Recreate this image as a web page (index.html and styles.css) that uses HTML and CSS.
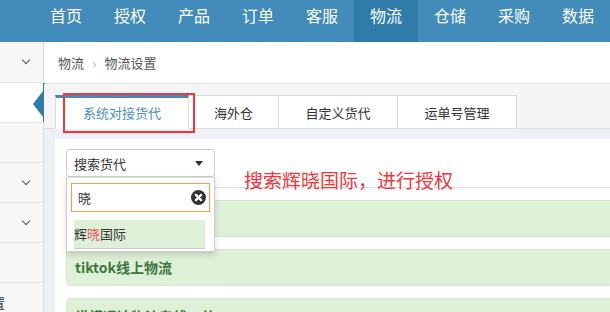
FILE: index.html
```html
<!DOCTYPE html>
<html lang="zh-CN">
<head>
    <meta charset="UTF-8">
    <meta name="viewport" content="width=device-width, initial-scale=1.0">
    <title>物流设置</title>
    <link rel="stylesheet" href="styles.css">
</head>
<body>
    <div class="topnav">
        <a class="nav-item">首页</a>
        <a class="nav-item">授权</a>
        <a class="nav-item">产品</a>
        <a class="nav-item">订单</a>
        <a class="nav-item">客服</a>
        <a class="nav-item active">物流</a>
        <a class="nav-item">仓储</a>
        <a class="nav-item">采购</a>
        <a class="nav-item">数据</a>
    </div>

    <div class="layout">
        <div class="sidebar">
            <div class="side-row"><span class="chevron"></span></div>
            <div class="side-row current"><span class="pointer"></span></div>
            <div class="side-row"></div>
            <div class="side-row"><span class="chevron"></span></div>
            <div class="side-row"><span class="chevron"></span></div>
            <div class="side-row"></div>
            <div class="side-row"><span class="cut-label">设置</span></div>
        </div>

        <div class="main">
            <div class="breadcrumb">
                <span>物流</span>
                <span class="crumb-sep">›</span>
                <span>物流设置</span>
            </div>

            <div class="tab-strip">
                <div class="tab active">系统对接货代</div>
                <div class="tab">海外仓</div>
                <div class="tab">自定义货代</div>
                <div class="tab">运单号管理</div>
                <div class="mark-box"></div>
            </div>

            <div class="content">
                <div class="panel">
                    <div class="note">搜索辉晓国际，进行授权</div>

                    <div class="select-box">
                        <span>搜索货代</span>
                        <span class="caret"></span>
                        <div class="dropdown">
                            <div class="search-field">
                                <span>晓</span>
                                <span class="clear-btn">
                                    <svg width="15" height="15" viewBox="0 0 16 16">
                                        <circle cx="8" cy="8" r="8" fill="#333"/>
                                        <path d="M5.2 5.2 L10.8 10.8 M10.8 5.2 L5.2 10.8" stroke="#fff" stroke-width="2.4" stroke-linecap="round"/>
                                    </svg>
                                </span>
                            </div>
                            <div class="result-item">辉<em>晓</em>国际</div>
                        </div>
                    </div>

                    <div class="divider"></div>

                    <div class="agent-list">
                        <div class="agent-row"></div>
                        <div class="agent-row">tiktok线上物流</div>
                        <div class="agent-row">纵横通达物流专线－美</div>
                    </div>
                </div>
            </div>
        </div>
    </div>
</body>
</html>
```

FILE: styles.css
```css
* {
    margin: 0;
    padding: 0;
    box-sizing: border-box;
}

body {
    width: 610px;
    height: 312px;
    overflow: hidden;
    background-color: #fff;
    font-family: "Noto Sans CJK SC", "Liberation Sans", sans-serif;
    font-size: 13px;
    color: #333;
}

/* 顶部导航 */
.topnav {
    height: 42px;
    display: flex;
    padding-left: 34px;
    background-color: #428bba;
}

.nav-item {
    width: 64px;
    padding-top: 3px;
    line-height: 24px;
    text-align: center;
    color: #fff;
    font-size: 16px;
}

.nav-item.active {
    background-color: #2f7cab;
}

.layout {
    display: flex;
    height: 270px;
}

/* 左侧菜单 */
.sidebar {
    width: 44px;
    flex-shrink: 0;
    background-color: #f7f7f7;
    border-right: 1px solid #dcdcdc;
}

.side-row {
    position: relative;
    height: 40px;
    border-bottom: 1px solid #e3e3e3;
    overflow: hidden;
}

.side-row:first-child {
    height: 41px;
}

.side-row.current {
    background-color: #fff;
    border-right: 2px solid #2f7cab;
    margin-right: -2px;
}

.pointer {
    position: absolute;
    right: 0;
    top: 8px;
    border-top: 13px solid transparent;
    border-bottom: 13px solid transparent;
    border-right: 10px solid #2f7cab;
}

.chevron {
    position: absolute;
    left: 23px;
    top: 15px;
    width: 6px;
    height: 6px;
    border-right: 1.3px solid #555;
    border-bottom: 1.3px solid #555;
    transform: rotate(45deg);
}

.cut-label {
    display: block;
    margin-left: -21px;
    line-height: 40px;
    font-size: 13px;
    color: #333;
}

/* 主体 */
.main {
    flex: 1;
    min-width: 0;
    display: flex;
    flex-direction: column;
}

.breadcrumb {
    flex-shrink: 0;
    height: 42px;
    display: flex;
    align-items: center;
    gap: 6px;
    padding-left: 14px;
    border-bottom: 1px solid #e3e3e3;
    color: #555;
}

.crumb-sep {
    color: #bbb;
    font-size: 15px;
    padding: 0 2px;
}

.tab-strip {
    flex-shrink: 0;
    position: relative;
    display: flex;
    height: 45px;
    padding: 11px 0 0 11px;
    background-color: #f5f5f5;
    border-bottom: 1px solid #dedede;
}

.tab {
    height: 34px;
    line-height: 33px;
    text-align: center;
    background-color: #fff;
    border: 1px solid #dcdcdc;
    border-left: none;
    color: #333;
}

.tab:nth-child(1) {
    width: 134px;
    border-left: 1px solid #dcdcdc;
    border-top: 3px solid #428bba;
    line-height: 30px;
    color: #4a8bc2;
    border-bottom-color: #fff;
}

.tab:nth-child(2) {
    width: 90px;
}

.tab:nth-child(3) {
    width: 119px;
}

.tab:nth-child(4) {
    width: 119px;
}

.mark-box {
    position: absolute;
    left: 19px;
    top: 9px;
    width: 132px;
    height: 40px;
    border: 2px solid #f5333b;
}

.content {
    flex: 1;
    min-height: 0;
    padding: 10px 0 0 11px;
    background-color: #edf0f5;
}

.panel {
    position: relative;
    height: 100%;
    padding: 10px 0 0 11px;
    background-color: #fff;
}

.note {
    position: absolute;
    left: 189px;
    top: 29px;
    line-height: 24px;
    font-size: 19px;
    color: #f5333b;
    white-space: nowrap;
}

/* 下拉选择 */
.select-box {
    position: relative;
    z-index: 2;
    width: 149px;
    height: 28px;
    display: flex;
    align-items: center;
    justify-content: space-between;
    padding: 0 11px 0 7px;
    border: 1px solid #ccc;
    border-radius: 3px;
    background-color: #fff;
}

.caret {
    border-left: 4px solid transparent;
    border-right: 4px solid transparent;
    border-top: 5px solid #333;
}

.dropdown {
    position: absolute;
    left: -1px;
    top: 27px;
    width: 149px;
    height: 75px;
    padding: 5px 4px 0 4px;
    background-color: #fff;
    border: 1px solid #ccc;
    border-top-color: #ddd;
    box-shadow: 0 3px 6px rgba(0, 0, 0, 0.15);
}

.search-field {
    height: 29px;
    display: flex;
    align-items: center;
    justify-content: space-between;
    padding: 0 3px 0 6px;
    border: 1px solid #f0a042;
}

.clear-btn {
    display: flex;
}

.result-item {
    height: 29px;
    margin: 8px 5px 0 3px;
    line-height: 28px;
    background-color: #dff0d8;
    border-bottom: 1px solid #ccc;
    color: #333;
}

.result-item em {
    font-style: normal;
    color: #e8505b;
}

.divider {
    margin-top: 10px;
    border-bottom: 1px solid #dedede;
}

/* 货代列表 */
.agent-list {
    display: flex;
    flex-direction: column;
    gap: 12px;
    margin-top: 12px;
    margin-right: -20px;
}

.agent-row {
    flex-shrink: 0;
    height: 37px;
    line-height: 35px;
    padding-left: 8px;
    background-color: #dff0d8;
    border: 1px solid #d3e8c8;
    border-radius: 4px;
    color: #3c763d;
    font-weight: bold;
    font-size: 14px;
}
```
